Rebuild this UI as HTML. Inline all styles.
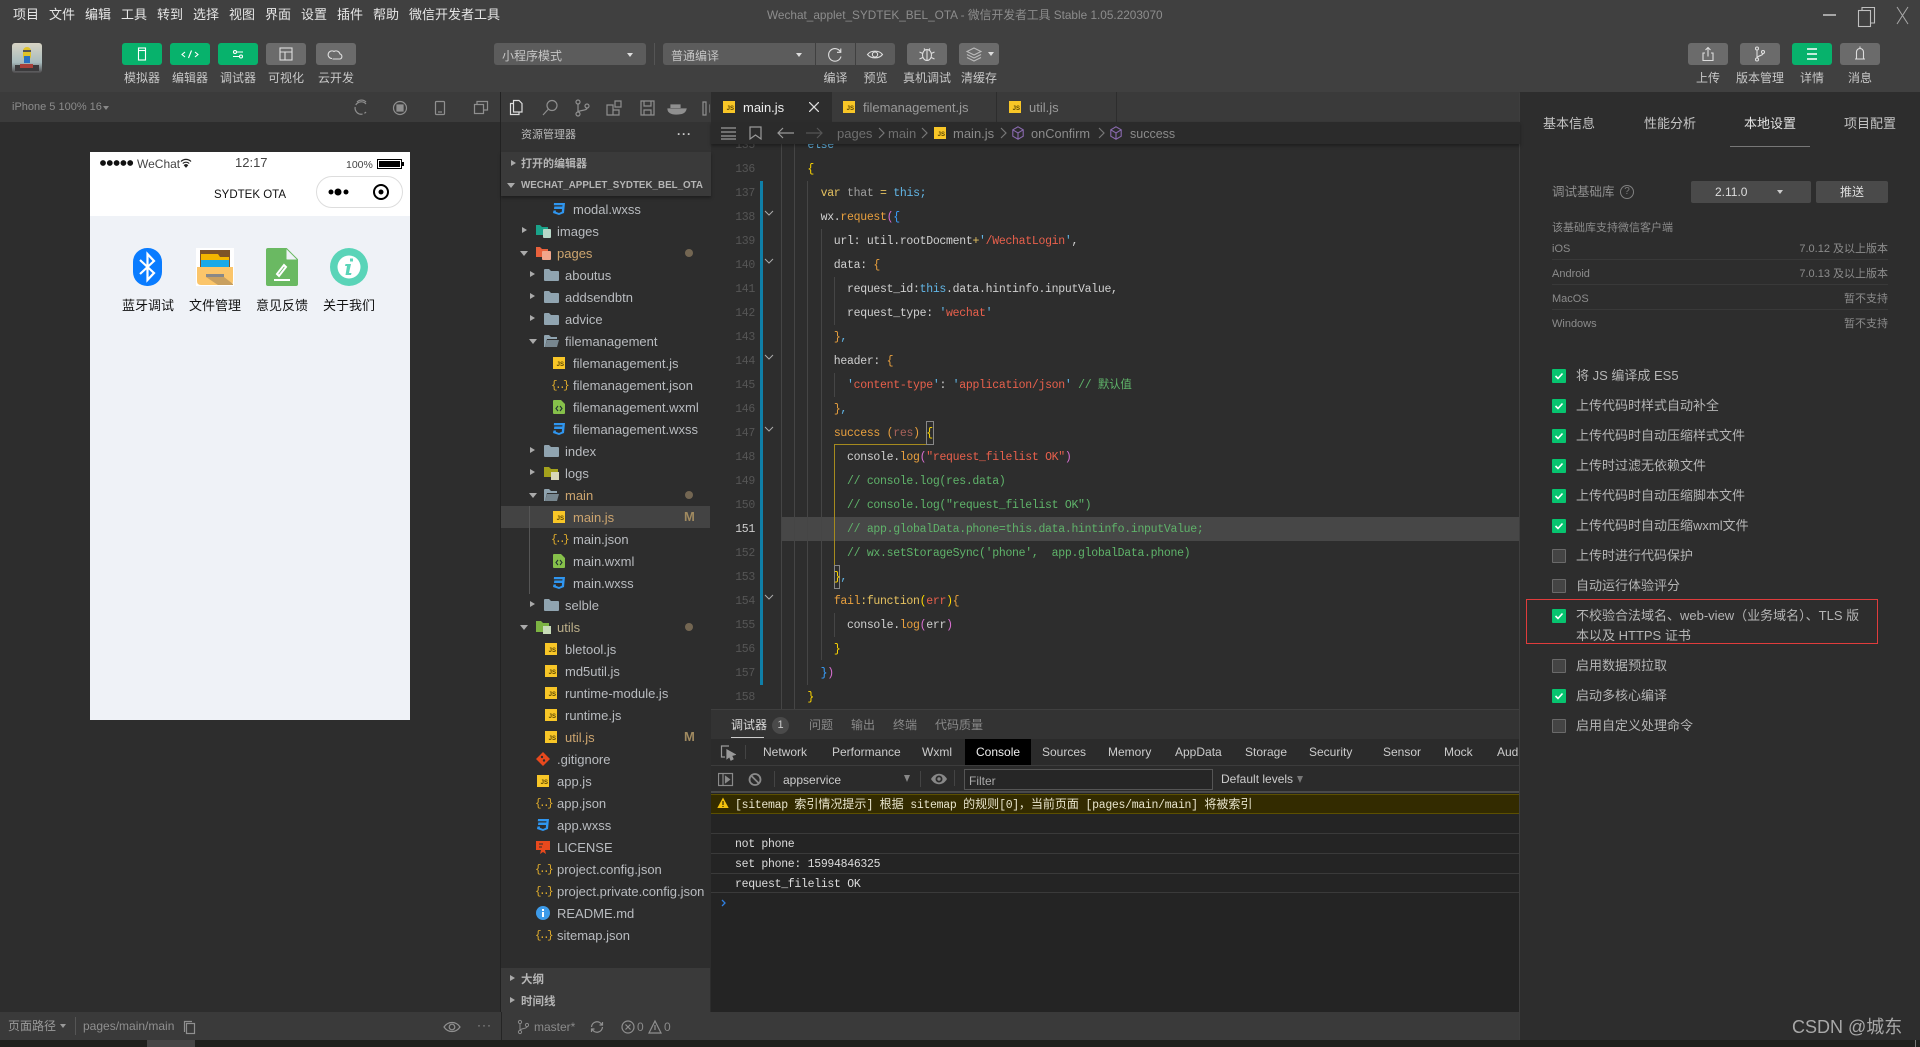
<!DOCTYPE html>
<html lang="zh"><head><meta charset="utf-8"><title>微信开发者工具</title>
<style>
*{box-sizing:border-box}
html,body{margin:0;padding:0;width:1920px;height:1047px;overflow:hidden;background:#2d2d2d;font-family:"Liberation Sans","Noto Sans CJK SC",sans-serif;color:#bbb}
.a{position:absolute;white-space:nowrap}
.t{position:absolute;white-space:nowrap;line-height:18px;font-size:13px}
.m{position:absolute;top:7px;line-height:16px;font-size:13px;color:#e6e6e6}
.btn{position:absolute;top:43px;width:40px;height:22px;border-radius:3px;background:#6b6b6b}
.g{background:#07b26c}
.btn svg{position:absolute;left:10px;top:1px;width:20px;height:20px;fill:none;stroke:#ddd;stroke-width:1.1}
.g svg{stroke:#fff}
.lb{position:absolute;top:70px;line-height:16px;font-size:12px;color:#c8c8c8;text-align:center;white-space:nowrap}
.r{position:absolute;height:22px;line-height:24px;font-size:13px;color:#b9bcc0;white-space:nowrap}
.o{color:#cda56f}
.ar{position:absolute;width:0;height:0;border-left:5px solid #aaa;border-top:3.5px solid transparent;border-bottom:3.5px solid transparent}
.ad{position:absolute;width:0;height:0;border-top:5px solid #aaa;border-left:4px solid transparent;border-right:4px solid transparent}
.js{position:absolute;width:12px;height:12px;background:#f8c627;color:#5a4500;font:bold 6px/7px "Liberation Sans",sans-serif;text-align:right;padding:5px 1px 0 0;overflow:hidden}
.fo{position:absolute;width:15px;height:12px}
.dot{position:absolute;width:8px;height:8px;border-radius:50%;background:#736652}
.mm{position:absolute;color:#a08a60;font-size:13px;font-weight:bold;line-height:16px}
.js2{position:absolute;color:#e5b02c;font:11px/16px "Liberation Mono",monospace;letter-spacing:-2.6px}
.ic{position:absolute;fill:none;stroke:#8f8f8f;stroke-width:1.2}
#code{position:absolute;left:711px;top:144px;width:809px;height:565px;overflow:hidden}
.l{position:absolute;left:70px;height:24px;font:11.5px/26px "Liberation Mono","Noto Sans CJK SC",monospace;letter-spacing:-.3px;color:#d0d0d0;white-space:pre}
.n{position:absolute;left:0;width:44px;text-align:right;height:24px;font:11.5px/26px "Liberation Mono",monospace;letter-spacing:-.3px;color:#555}
.kw{color:#e6c260}.tb{color:#62b6e6}.st{color:#e8604c}.cm{color:#5fb36a}.or{color:#e9a03e}.ye{color:#ffd700}.pu{color:#d86fd0}.bl{color:#38a0ff}.gr{color:#a0a0a0}.br{color:#a8625a}
.gd{position:absolute;width:1px;background:#454545}
.dt{position:absolute;top:744px;line-height:16px;font-size:12px;color:#ccc}
.dbt{position:absolute;top:717px;line-height:16px;font-size:12px;color:#8a8a8a}
.cl{position:absolute;left:735px;height:16px;font:11.5px/16px "Liberation Mono","Noto Sans CJK SC",monospace;letter-spacing:-.3px;color:#ddd;white-space:pre}
.cl b{font-weight:normal;font-size:12px;letter-spacing:0}
.hr{position:absolute;left:711px;width:809px;height:1px;background:#3a3a3a}
.cb{position:absolute;left:1552px;width:14px;height:14px;border-radius:1px;background:#07c46f}
.cb svg{position:absolute;left:1px;top:1px;width:12px;height:12px;fill:none;stroke:#fff;stroke-width:1.6}
.cn{position:absolute;left:1552px;width:14px;height:14px;border-radius:1px;background:#444;border:1px solid #6a6a6a}
.ck{position:absolute;left:1576px;line-height:22px;height:20px;font-size:13px;color:#b5b5b5;white-space:nowrap}
.inf{position:absolute;line-height:16px;height:14px;font-size:11px;color:#8c8c8c;white-space:nowrap}
.rh{position:absolute;left:1552px;width:336px;height:1px;background:#393939}
</style></head><body>

<!-- top area -->
<div class="a" style="left:0;top:0;width:1920px;height:92px;background:#404040"></div>
<div class="m" style="left:13px">项目</div><div class="m" style="left:49px">文件</div><div class="m" style="left:85px">编辑</div><div class="m" style="left:121px">工具</div><div class="m" style="left:157px">转到</div><div class="m" style="left:193px">选择</div><div class="m" style="left:229px">视图</div><div class="m" style="left:265px">界面</div><div class="m" style="left:301px">设置</div><div class="m" style="left:337px">插件</div><div class="m" style="left:373px">帮助</div><div class="m" style="left:409px">微信开发者工具</div>
<div class="a" style="left:767px;top:7px;line-height:16px;font-size:11.8px;color:#8d8d8d">Wechat_applet_SYDTEK_BEL_OTA - 微信开发者工具 Stable 1.05.2203070</div>
<svg class="a" style="left:1820px;top:4px" width="95" height="24" fill="none" stroke="#c0c0c0" stroke-width="1.1"><path d="M3 11H16" stroke-width="1.6"/><rect x="38.5" y="6.500" width="12" height="16"/><path d="M42 6.500V3.500H54.500V19H50.500"/><path d="M77 3L88 20M88 3L77 20" stroke="#a8a8a8" stroke-width="1"/></svg>

<!-- avatar -->
<svg class="a" style="left:12px;top:43px;border-radius:3px" width="30" height="30"><defs><linearGradient id="av" x1="0" y1="0" x2="0" y2="1"><stop offset="0" stop-color="#d8d4c4"/><stop offset=".65" stop-color="#a8bcbe"/><stop offset="1" stop-color="#4d4a4c"/></linearGradient></defs><rect width="30" height="30" fill="url(#av)"/><rect x="11" y="4" width="8" height="13" rx="4" fill="#e0c228"/><rect x="12" y="13" width="6" height="7" fill="#2a6fc0"/><rect x="3" y="22" width="24" height="6" fill="#3b3a3c"/><rect x="8" y="21" width="13" height="4" fill="#a8403a"/><rect x="11" y="7" width="8" height="2" fill="#555"/></svg>

<div class="btn g" style="left:122px"><svg viewBox="0 0 20 20"><rect x="6.500" y="4" width="7" height="12"/><path d="M6.500 6.500H13.500"/></svg></div>
<div class="btn g" style="left:170px"><svg viewBox="0 0 20 20"><path d="M5 8L2 10.500L5 13M15 8L18 10.500L15 13M11.500 6.500L8.500 14"/></svg></div>
<div class="btn g" style="left:218px"><svg viewBox="0 0 20 20"><path d="M5 8H15M5 12.500H15"/><circle cx="7" cy="8" r="1.500" fill="#07b26c"/><circle cx="13" cy="12.500" r="1.500" fill="#07b26c"/></svg></div>
<div class="btn" style="left:266px"><svg viewBox="0 0 20 20"><rect x="4" y="4" width="12" height="12"/><path d="M4 8H16M9 8V16"/></svg></div>
<div class="btn" style="left:316px"><svg viewBox="0 0 20 20"><path d="M6 14.500A3.800 3.800 0 1 1 8 7.500A4 4 0 0 1 14 10A2.600 2.600 0 0 1 14 15H6.500"/></svg></div>
<div class="lb" style="left:122px;width:40px">模拟器</div><div class="lb" style="left:170px;width:40px">编辑器</div><div class="lb" style="left:218px;width:40px">调试器</div><div class="lb" style="left:266px;width:40px">可视化</div><div class="lb" style="left:316px;width:40px">云开发</div>

<div class="a" style="left:494px;top:43px;width:152px;height:22px;background:#5c5c5c;border-radius:3px"></div>
<div class="t" style="left:502px;top:47px;font-size:12px;color:#c6c6c6">小程序模式</div>
<div class="a" style="left:627px;top:53px;border-top:4px solid #ddd;border-left:3px solid transparent;border-right:3px solid transparent"></div>
<div class="a" style="left:654px;top:43px;width:1px;height:22px;background:#555"></div>
<div class="a" style="left:663px;top:43px;width:152px;height:22px;background:#5c5c5c;border-radius:3px 0 0 3px"></div>
<div class="t" style="left:671px;top:47px;font-size:12px;color:#c6c6c6">普通编译</div>
<div class="a" style="left:796px;top:53px;border-top:4px solid #ddd;border-left:3px solid transparent;border-right:3px solid transparent"></div>
<div class="btn" style="left:816px;width:39px;background:#5c5c5c;border-radius:0"><svg viewBox="0 0 20 20" style="left:9px"><path d="M15.500 8A6.300 6.300 0 1 0 16 12.500M15.800 4.500V8.300H12"/></svg></div>
<div class="btn" style="left:856px;width:39px;background:#5c5c5c;border-radius:0 3px 3px 0"><svg viewBox="0 0 20 20" style="left:9px"><path d="M2.500 10.500C6 6 14 6 17.500 10.500C14 15 6 15 2.500 10.500Z"/><circle cx="10" cy="10.500" r="2.600"/></svg></div>
<div class="btn" style="left:907px"><svg viewBox="0 0 20 20"><ellipse cx="10" cy="11" rx="4.500" ry="5.500"/><path d="M7 4.500L8.500 6.500M13 4.500L11.500 6.500M10 6V16.500M2.500 8L5.800 9.500M17.500 8L14.200 9.500M2.500 15L5.800 13.500M17.500 15L14.200 13.500"/></svg></div>
<div class="btn" style="left:959px"><svg viewBox="0 0 20 20" style="left:5px;stroke:#bbb"><path d="M10 4L17 7.500L10 11L3 7.500ZM3 10.500L10 14L17 10.500M3 13.500L10 17L17 13.500"/></svg><div class="a" style="left:29px;top:9px;border-top:4px solid #ddd;border-left:3px solid transparent;border-right:3px solid transparent"></div></div>
<div class="lb" style="left:816px;width:39px">编译</div><div class="lb" style="left:856px;width:39px">预览</div><div class="lb" style="left:900px;width:54px">真机调试</div><div class="lb" style="left:955px;width:48px">清缓存</div>

<div class="btn" style="left:1688px"><svg viewBox="0 0 20 20"><path d="M7 9H5V16.500H15V9H13M10 12.500V3.500M7.500 6L10 3.500L12.500 6"/></svg></div>
<div class="btn" style="left:1740px"><svg viewBox="0 0 20 20"><circle cx="7" cy="4.500" r="1.500"/><circle cx="7" cy="15.500" r="1.500"/><circle cx="13" cy="8" r="1.500"/><path d="M7 6V14M13 9.500C13 12 8 11 7 14"/></svg></div>
<div class="btn g" style="left:1792px"><svg viewBox="0 0 20 20"><path d="M5 5H15M5 10H15M5 15H15" stroke-width="1.400"/></svg></div>
<div class="btn" style="left:1840px"><svg viewBox="0 0 20 20"><path d="M6.500 15V8A3.500 3.500 0 0 1 13.500 8V15ZM5 15H15M10 2.500V4.500"/></svg></div>
<div class="lb" style="left:1688px;width:40px">上传</div><div class="lb" style="left:1736px;width:48px">版本管理</div><div class="lb" style="left:1792px;width:40px">详情</div><div class="lb" style="left:1840px;width:40px">消息</div>

<!-- simulator panel -->
<div class="a" style="left:0;top:92px;width:500px;height:30px;background:#3b3b3b"></div>
<div class="t" style="left:12px;top:98px;font-size:11px;color:#8c8c8c">iPhone 5 100% 16</div>
<div class="a" style="left:103px;top:106px;border-top:4px solid #888;border-left:3px solid transparent;border-right:3px solid transparent"></div>
<svg class="ic" style="left:350px;top:98px" width="140" height="20"><path d="M16 6A6.200 6.200 0 1 0 16 14" stroke-dasharray="12 2"/><path d="M7 4A6.200 6.200 0 0 1 16 4"/><circle cx="50" cy="10" r="6.500"/><rect x="47" y="7" width="6" height="6" fill="#8f8f8f"/><rect x="85.500" y="3.500" width="9" height="13" rx="1"/><path d="M88 14H92"/><rect x="124.500" y="6.500" width="9" height="9"/><path d="M127 6.500V3.500H137.500V12H133.500"/></svg>

<div class="a" style="left:90px;top:152px;width:320px;height:568px;background:#eff2f7"></div>
<div class="a" style="left:90px;top:152px;width:320px;height:64px;background:#fff"></div>
<svg class="a" style="left:100px;top:159px" width="36" height="8" fill="#111"><circle cx="3" cy="4" r="2.900"/><circle cx="9.800" cy="4" r="2.900"/><circle cx="16.600" cy="4" r="2.900"/><circle cx="23.400" cy="4" r="2.900"/><circle cx="30.200" cy="4" r="2.900"/></svg>
<div class="t" style="left:137px;top:155px;font-size:12px;color:#444">WeChat</div>
<svg class="a" style="left:180px;top:158px" width="12" height="10" fill="none" stroke="#222" stroke-width="1.200"><path d="M1 3.500A7 7 0 0 1 11 3.500M2.800 5.500A4.500 4.500 0 0 1 9.200 5.500"/><path d="M4.500 7.300A2 2 0 0 1 7.500 7.300L6 9Z" fill="#222"/></svg>
<div class="t" style="left:235px;top:154px;font-size:13px;color:#444">12:17</div>
<div class="t" style="left:346px;top:156px;font-size:10.500px;color:#444">100%</div>
<div class="a" style="left:377px;top:159px;width:25px;height:10px;background:#000;border:1px solid #000;box-shadow:inset 0 0 0 1px #fff"></div>
<div class="a" style="left:402px;top:162px;width:2px;height:4px;background:#000"></div>
<div class="t" style="top:186px;font-size:11.500px;color:#111;transform:translateX(-50%);left:250px">SYDTEK OTA</div>
<div class="a" style="left:316px;top:176px;width:87px;height:32px;border:1px solid #ddd;border-radius:16px;background:#fff"></div>
<svg class="a" style="left:326px;top:180px" width="70" height="24"><circle cx="5" cy="12" r="2.500"/><circle cx="12" cy="12" r="3.500"/><circle cx="20" cy="12" r="2.500"/><circle cx="55" cy="12" r="7" fill="none" stroke="#000" stroke-width="2"/><circle cx="55" cy="12" r="2.500"/></svg>

<svg class="a" style="left:133px;top:248px" width="29" height="38"><rect width="29" height="38" rx="14" fill="#0a7cff"/><path d="M7 12L21 25L14.500 32V6L21 13L7 26" fill="none" stroke="#fff" stroke-width="2.200"/></svg>
<svg class="a" style="left:196px;top:248px" width="38" height="38"><rect width="38" height="38" fill="#fff"/><rect x="4" y="2" width="30" height="22" fill="#7d5327"/><path d="M5 6H22L24 9H33V20H5Z" fill="#f2b600"/><path d="M5 12H33V20H5Z" fill="#19a9e8"/><path d="M1 19H37V33Q37 37 33 37H5Q1 37 1 33Z" fill="#fbc56a"/><path d="M10 26H28V29H10Z" fill="#888"/><path d="M10 29H28L37 36V37H22Z" fill="#c9a060"/></svg>
<svg class="a" style="left:266px;top:248px" width="32" height="38"><path d="M2 0H20L32 12V36Q32 38 30 38H2Q0 38 0 36V2Q0 0 2 0Z" fill="#6ab962"/><path d="M20 0L32 12H21Q20 12 20 11Z" fill="#eff2f7" stroke="#6ab962"/><path d="M11 26L18 17L20 19L13 28ZM8 32H24" fill="none" stroke="#fff" stroke-width="2"/></svg>
<svg class="a" style="left:330px;top:248px" width="38" height="38"><circle cx="19" cy="19" r="19" fill="#5ad4b8"/><circle cx="19" cy="19" r="11.500" fill="#fff"/><path d="M20 10.500h3v3h-3zM15.500 16H21L19 25H21.500L21 27H15.500L17 18H15Z" fill="#5ad4b8"/></svg>
<div class="t" style="left:122px;top:297px;color:#111">蓝牙调试</div><div class="t" style="left:189px;top:297px;color:#111">文件管理</div><div class="t" style="left:256px;top:297px;color:#111">意见反馈</div><div class="t" style="left:323px;top:297px;color:#111">关于我们</div>

<!-- tree panel -->
<div class="a" style="left:500px;top:92px;width:1px;height:920px;background:#222"></div>
<div class="a" style="left:501px;top:92px;width:210px;height:30px;background:#3a3a3a"></div>
<svg class="ic" style="left:508px;top:98px" width="203" height="20"><path d="M5 5.500H2.500V16.500H11V14M5.500 2.500H11L14 5.500V14H5.500Z" stroke="#ddd"/><circle cx="44" cy="7.500" r="5"/><path d="M40 11.500L35 17"/><circle cx="70" cy="4" r="2"/><circle cx="70" cy="16" r="2"/><circle cx="79" cy="8" r="2"/><path d="M70 6V14M79 10C79 13 71 12 70 14"/><path d="M99 7H105V17H99ZM105 12H111V17H105ZM107 3H113V9H107Z"/><path d="M133 3H146V17H133ZM136 3V8H143V3M136 17V12H143V17"/><path d="M160 11H178C177 15 174 16 168 16C163 16 160 14 160 11ZM163 10V7H166V10M166 10V7H169V10M169 10V7H172V10" fill="#8f8f8f"/><path d="M195 4H198V17H195ZM202 7H205V14H202Z"/></svg>
<div class="a" style="left:501px;top:122px;width:210px;height:30px;background:#333"></div>
<div class="t" style="left:521px;top:126px;font-size:11px;color:#bbb">资源管理器</div>
<div class="a" style="left:677px;top:128px;color:#ccc;font-size:12px;line-height:12px;letter-spacing:1px;font-weight:bold">···</div>
<div class="a" style="left:501px;top:152px;width:210px;height:44px;background:#3a3a3a;box-shadow:0 2px 3px rgba(0,0,0,.35)"></div>
<div class="ar" style="left:511px;top:160px"></div><div class="t" style="left:521px;top:155px;font-size:11px;font-weight:bold;color:#b5b5b5">打开的编辑器</div>
<div class="ad" style="left:507px;top:183px"></div><div class="t" style="left:521px;top:177px;font-size:9.800px;font-weight:bold;color:#b5b5b5">WECHAT_APPLET_SYDTEK_BEL_OTA</div>

<div class="a" style="left:501px;top:506px;width:209px;height:22px;background:#434343"></div>
<div class="a" style="left:529px;top:506px;width:1px;height:88px;background:#555"></div>

<svg width="0" height="0" style="position:absolute"><defs>
<symbol id="fd" viewBox="0 0 15 12"><path d="M0 1Q0 0 1 0H5L7 2H14Q15 2 15 3V11Q15 12 14 12H1Q0 12 0 11Z" fill="#90a4b0"/></symbol>
<symbol id="fo" viewBox="0 0 15 12"><path d="M0 1Q0 0 1 0H5L7 2H13V4H3L1 12H0Z" fill="#90a4b0"/><path d="M3 5H15L13 12H1Z" fill="#90a4b0" opacity=".75"/></symbol>
<symbol id="ws" viewBox="0 0 14 14"><path d="M2 1H13L12 11L7 13L1 11L1.500 8.500H4L3.800 9.800L7 11L9.800 9.800L10 7H2L2.300 4.500H10.300L10.500 3.300H1.800Z" fill="#2f96f0"/></symbol>
<symbol id="wx" viewBox="0 0 12 14"><path d="M1 0H8L12 4V13Q12 14 11 14H1Q0 14 0 13V1Q0 0 1 0Z" fill="#86c04a"/><path d="M5 6L3 8.500L5 11M7 6L9 8.500L7 11" fill="none" stroke="#233" stroke-width="1.100"/></symbol>
<symbol id="cube" viewBox="0 0 12 14"><path d="M6 .8L11.200 3.800V10.200L6 13.200L.8 10.200V3.800ZM.8 3.800L6 7L11.200 3.800M6 7V13.200" fill="none" stroke="#8a6ab0" stroke-width="1.100"/></symbol>
<symbol id="gt" viewBox="0 0 12 14"><circle cx="3" cy="2" r="1.600" fill="none" stroke="#8a8a8a"/><circle cx="3" cy="12" r="1.600" fill="none" stroke="#8a8a8a"/><circle cx="10" cy="5" r="1.600" fill="none" stroke="#8a8a8a"/><path d="M3 3.600V10.400M10 6.600C10 9 4 8 3 10.400" fill="none" stroke="#8a8a8a"/></symbol>
</defs></svg>

<svg class="a" style="left:552px;top:202px" width="14" height="14"><use href="#ws"/></svg><div class="r" style="left:573px;top:198px">modal.wxss</div>
<div class="ar" style="left:522px;top:227px"></div><svg class="a" style="left:536px;top:224px" width="15" height="14"><path d="M0 1H4L6 3H12V11H0Z" fill="#1aa38a"/><rect x="7" y="5" width="8" height="9" rx="1" fill="#b8d8c8"/></svg><div class="r" style="left:557px;top:220px">images</div>
<div class="ad" style="left:520px;top:251px"></div><svg class="a" style="left:536px;top:246px" width="15" height="14"><path d="M0 1H4L6 3H12V11H0Z" fill="#e8613c"/><rect x="6" y="5" width="9" height="9" rx="1" fill="#f2a68c"/></svg><div class="r o" style="left:557px;top:242px">pages</div><div class="dot" style="left:685px;top:249px"></div>
<div class="ar" style="left:530px;top:271px"></div><svg class="fo" style="left:544px;top:269px"><use href="#fd"/></svg><div class="r" style="left:565px;top:264px">aboutus</div>
<div class="ar" style="left:530px;top:293px"></div><svg class="fo" style="left:544px;top:291px"><use href="#fd"/></svg><div class="r" style="left:565px;top:286px">addsendbtn</div>
<div class="ar" style="left:530px;top:315px"></div><svg class="fo" style="left:544px;top:313px"><use href="#fd"/></svg><div class="r" style="left:565px;top:308px">advice</div>
<div class="ad" style="left:529px;top:339px"></div><svg class="fo" style="left:544px;top:335px"><use href="#fo"/></svg><div class="r" style="left:565px;top:330px">filemanagement</div>
<div class="js" style="left:553px;top:357px">JS</div><div class="r" style="left:573px;top:352px">filemanagement.js</div>
<div class="js2" style="left:551px;top:378px">{..}</div><div class="r" style="left:573px;top:374px">filemanagement.json</div>
<svg class="a" style="left:553px;top:400px" width="12" height="14"><use href="#wx"/></svg><div class="r" style="left:573px;top:396px">filemanagement.wxml</div>
<svg class="a" style="left:552px;top:422px" width="14" height="14"><use href="#ws"/></svg><div class="r" style="left:573px;top:418px">filemanagement.wxss</div>
<div class="ar" style="left:530px;top:447px"></div><svg class="fo" style="left:544px;top:445px"><use href="#fd"/></svg><div class="r" style="left:565px;top:440px">index</div>
<div class="ar" style="left:530px;top:469px"></div><svg class="a" style="left:544px;top:467px" width="15" height="13"><path d="M0 0H5L7 2H14V10H0Z" fill="#a4a21c"/><rect x="7" y="5" width="8" height="8" fill="#d8d8b8"/></svg><div class="r" style="left:565px;top:462px">logs</div>
<div class="ad" style="left:529px;top:493px"></div><svg class="fo" style="left:544px;top:489px"><use href="#fo"/></svg><div class="r o" style="left:565px;top:484px">main</div><div class="dot" style="left:685px;top:491px"></div>
<div class="js" style="left:553px;top:511px">JS</div><div class="r o" style="left:573px;top:506px">main.js</div><div class="mm" style="left:684px;top:509px">M</div>
<div class="js2" style="left:551px;top:532px">{..}</div><div class="r" style="left:573px;top:528px">main.json</div>
<svg class="a" style="left:553px;top:554px" width="12" height="14"><use href="#wx"/></svg><div class="r" style="left:573px;top:550px">main.wxml</div>
<svg class="a" style="left:552px;top:576px" width="14" height="14"><use href="#ws"/></svg><div class="r" style="left:573px;top:572px">main.wxss</div>
<div class="ar" style="left:530px;top:601px"></div><svg class="fo" style="left:544px;top:599px"><use href="#fd"/></svg><div class="r" style="left:565px;top:594px">selble</div>
<div class="ad" style="left:520px;top:625px"></div><svg class="a" style="left:536px;top:621px" width="15" height="14"><path d="M0 0H5L7 2H13V11H0Z" fill="#7cb342"/><rect x="7" y="5" width="8" height="8" fill="#c8dcb8"/></svg><div class="r" style="left:557px;top:616px;color:#bdb08a">utils</div><div class="dot" style="left:685px;top:623px"></div>
<div class="js" style="left:545px;top:643px">JS</div><div class="r" style="left:565px;top:638px">bletool.js</div>
<div class="js" style="left:545px;top:665px">JS</div><div class="r" style="left:565px;top:660px">md5util.js</div>
<div class="js" style="left:545px;top:687px">JS</div><div class="r" style="left:565px;top:682px">runtime-module.js</div>
<div class="js" style="left:545px;top:709px">JS</div><div class="r" style="left:565px;top:704px">runtime.js</div>
<div class="js" style="left:545px;top:731px">JS</div><div class="r o" style="left:565px;top:726px">util.js</div><div class="mm" style="left:684px;top:729px">M</div>
<svg class="a" style="left:536px;top:752px" width="14" height="14"><path d="M7 0L14 7L7 14L0 7Z" fill="#e8491d"/><circle cx="6" cy="5" r="1.200" fill="#2d2d2d"/><circle cx="8" cy="8.500" r="1.200" fill="#2d2d2d"/></svg><div class="r" style="left:557px;top:748px">.gitignore</div>
<div class="js" style="left:537px;top:775px">JS</div><div class="r" style="left:557px;top:770px">app.js</div>
<div class="js2" style="left:535px;top:796px">{..}</div><div class="r" style="left:557px;top:792px">app.json</div>
<svg class="a" style="left:536px;top:818px" width="14" height="14"><use href="#ws"/></svg><div class="r" style="left:557px;top:814px">app.wxss</div>
<svg class="a" style="left:536px;top:841px" width="14" height="13"><path d="M0 0H14V9H9L10 13L7 11L4 13L5 9H0Z" fill="#e8491d"/><path d="M3 3H7M3 6H6" stroke="#2d2d2d"/></svg><div class="r" style="left:557px;top:836px">LICENSE</div>
<div class="js2" style="left:535px;top:862px">{..}</div><div class="r" style="left:557px;top:858px">project.config.json</div>
<div class="js2" style="left:535px;top:884px">{..}</div><div class="r" style="left:557px;top:880px">project.private.config.json</div>
<svg class="a" style="left:536px;top:906px" width="14" height="14"><circle cx="7" cy="7" r="7" fill="#3d9be9"/><path d="M6 3h2v2H6zM6 6h2v5H6z" fill="#fff"/></svg><div class="r" style="left:557px;top:902px">README.md</div>
<div class="js2" style="left:535px;top:928px">{..}</div><div class="r" style="left:557px;top:924px">sitemap.json</div>

<div class="a" style="left:501px;top:968px;width:209px;height:44px;background:#3a3a3a"></div>
<div class="ar" style="left:510px;top:975px"></div><div class="t" style="left:521px;top:971px;font-size:11.500px;font-weight:bold;color:#b5b5b5">大纲</div>
<div class="ar" style="left:510px;top:997px"></div><div class="t" style="left:521px;top:993px;font-size:11.500px;font-weight:bold;color:#b5b5b5">时间线</div>

<!-- editor -->
<div class="a" style="left:710px;top:92px;width:810px;height:30px;background:#3a3a3a"></div>
<div class="a" style="left:711px;top:92px;width:120px;height:30px;background:#2d2d2d"></div>
<div class="a" style="left:831px;top:92px;width:1px;height:30px;background:#2d2d2d"></div>
<div class="a" style="left:996px;top:92px;width:1px;height:30px;background:#2d2d2d"></div>
<div class="a" style="left:1116px;top:92px;width:1px;height:30px;background:#2d2d2d"></div>
<div class="js" style="left:723px;top:101px">JS</div><div class="t" style="left:743px;top:99px;color:#eee">main.js</div>
<svg class="a" style="left:809px;top:102px" width="10" height="10" stroke="#ddd" stroke-width="1.300"><path d="M0 0L10 10M10 0L0 10"/></svg>
<div class="js" style="left:843px;top:101px">JS</div><div class="t" style="left:863px;top:99px;color:#9a9a9a">filemanagement.js</div>
<div class="js" style="left:1009px;top:101px">JS</div><div class="t" style="left:1029px;top:99px;color:#9a9a9a">util.js</div>

<div class="a" style="left:711px;top:122px;width:809px;height:22px;background:#2b2b2b;box-shadow:0 2px 3px rgba(0,0,0,.35);z-index:2"></div>
<div style="position:absolute;z-index:3;left:0;top:0">
<svg class="ic" style="left:718px;top:125px" width="115" height="16"><path d="M3 3H18M3 7H18M3 11H18M3 14H18" stroke="#9a9a9a"/><path d="M32 2H43V14L37.500 10L32 14Z" stroke="#9a9a9a"/><path d="M76 8H60M65 3L60 8L65 13" stroke="#9a9a9a"/><path d="M88 8H104M99 3L104 8L99 13" stroke="#555"/></svg>
<div class="t" style="left:837px;top:125px;color:#6f6f6f">pages</div>
<svg class="ic" style="left:877px;top:127px;stroke:#777" width="8" height="12"><path d="M2 1L7 6L2 11"/></svg>
<div class="t" style="left:888px;top:125px;color:#6f6f6f">main</div>
<svg class="ic" style="left:920px;top:127px;stroke:#777" width="8" height="12"><path d="M2 1L7 6L2 11"/></svg>
<div class="js" style="left:934px;top:127px">JS</div>
<div class="t" style="left:953px;top:125px;color:#8a8a8a">main.js</div>
<svg class="ic" style="left:999px;top:127px;stroke:#777" width="8" height="12"><path d="M2 1L7 6L2 11"/></svg>
<svg class="a" style="left:1012px;top:126px" width="12" height="14"><use href="#cube"/></svg>
<div class="t" style="left:1031px;top:125px;color:#8a8a8a;font-size:12.800px">onConfirm</div>
<svg class="ic" style="left:1097px;top:127px;stroke:#777" width="8" height="12"><path d="M2 1L7 6L2 11"/></svg>
<svg class="a" style="left:1110px;top:126px" width="12" height="14"><use href="#cube"/></svg>
<div class="t" style="left:1130px;top:125px;color:#8a8a8a;font-size:12.500px">success</div>
</div>

<div id="code">
<div class="a" style="left:70px;top:373px;width:739px;height:24px;background:#474747"></div>
<div class="gd" style="left:70px;top:0;height:565px"></div>
<div class="gd" style="left:83px;top:0;height:565px"></div>
<div class="gd" style="left:96px;top:37px;height:504px"></div>
<div class="gd" style="left:110px;top:85px;height:431px"></div>
<div class="gd" style="left:123px;top:133px;height:48px"></div>
<div class="gd" style="left:123px;top:229px;height:24px"></div>
<div class="gd" style="left:123px;top:469px;height:24px"></div>
<div class="a" style="left:49px;top:37px;width:3px;height:504px;background:#0f7fa8"></div>
<div class="a" style="left:123px;top:300px;width:100px;height:1px;background:#a58a1e"></div>
<div class="a" style="left:123px;top:300px;width:1px;height:121px;background:#a58a1e"></div>
<div class="a" style="left:215px;top:277px;width:8px;height:24px;border:1px solid #888"></div>
<div class="a" style="left:123px;top:421px;width:6px;height:24px;border:1px solid #888"></div>
<svg class="a" style="left:52px;top:0" width="14" height="565" fill="none" stroke="#aaa" stroke-width="1"><path d="M2 67L6 71L10 67M2 115L6 119L10 115M2 211L6 215L10 211M2 283L6 287L10 283M2 451L6 455L10 451"/></svg>

<div class="n" style="top:-11px">135</div><div class="l tb" style="top:-11px">    else</div>
<div class="n" style="top:13px">136</div><div class="l ye" style="top:13px">    {</div>
<div class="n" style="top:37px">137</div><div class="l" style="top:37px">      <span class="kw">var</span> <span class="gr">that</span> <span class="kw">=</span> <span class="tb">this;</span></div>
<div class="n" style="top:61px">138</div><div class="l" style="top:61px">      wx.<span class="or">request</span><span class="pu">(</span><span class="bl">{</span></div>
<div class="n" style="top:85px">139</div><div class="l" style="top:85px">        url: util.rootDocment<span class="kw">+</span><span class="tb">'</span><span class="st">/WechatLogin</span><span class="tb">'</span>,</div>
<div class="n" style="top:109px">140</div><div class="l" style="top:109px">        data: <span class="or">{</span></div>
<div class="n" style="top:133px">141</div><div class="l" style="top:133px">          request_id:<span class="tb">this</span>.data.hintinfo.inputValue,</div>
<div class="n" style="top:157px">142</div><div class="l" style="top:157px">          request_type: <span class="tb">'</span><span class="st">wechat</span><span class="tb">'</span></div>
<div class="n" style="top:181px">143</div><div class="l" style="top:181px">        <span class="or">}</span><span class="tb">,</span></div>
<div class="n" style="top:205px">144</div><div class="l" style="top:205px">        header: <span class="or">{</span></div>
<div class="n" style="top:229px">145</div><div class="l" style="top:229px">          <span class="tb">'</span><span class="st">content-type</span><span class="tb">'</span>: <span class="tb">'</span><span class="st">application/json</span><span class="tb">'</span> <span class="cm">// 默认值</span></div>
<div class="n" style="top:253px">146</div><div class="l" style="top:253px">        <span class="or">}</span><span class="tb">,</span></div>
<div class="n" style="top:277px">147</div><div class="l" style="top:277px">        <span class="or">success</span> <span class="or">(</span><span class="br">res</span><span class="or">)</span> <span class="ye">{</span></div>
<div class="n" style="top:301px">148</div><div class="l" style="top:301px">          console.<span class="or">log</span><span class="pu">(</span><span class="st">"request_filelist OK"</span><span class="pu">)</span></div>
<div class="n" style="top:325px">149</div><div class="l cm" style="top:325px">          // console.log(res.data)</div>
<div class="n" style="top:349px">150</div><div class="l cm" style="top:349px">          // console.log("request_filelist OK")</div>
<div class="n" style="top:373px;color:#ccc">151</div><div class="l cm" style="top:373px">          // app.globalData.phone=this.data.hintinfo.inputValue;</div>
<div class="n" style="top:397px">152</div><div class="l cm" style="top:397px">          // wx.setStorageSync('phone',  app.globalData.phone)</div>
<div class="n" style="top:421px">153</div><div class="l" style="top:421px">        <span class="ye">}</span><span class="tb">,</span></div>
<div class="n" style="top:445px">154</div><div class="l" style="top:445px">        <span class="or">fail</span><span class="kw">:function</span><span class="ye">(</span><span class="st">err</span><span class="ye">)</span><span class="or">{</span></div>
<div class="n" style="top:469px">155</div><div class="l" style="top:469px">          console.<span class="or">log</span><span class="pu">(</span>err<span class="pu">)</span></div>
<div class="n" style="top:493px">156</div><div class="l" style="top:493px">        <span class="ye">}</span></div>
<div class="n" style="top:517px">157</div><div class="l" style="top:517px">      <span class="bl">}</span><span class="pu">)</span></div>
<div class="n" style="top:541px">158</div><div class="l ye" style="top:541px">    }</div>
</div>

<!-- debug panel -->
<div class="a" style="left:711px;top:709px;width:809px;height:303px;background:#242424;border-top:1px solid #3f3f3f"></div>
<div class="a" style="left:711px;top:710px;width:809px;height:29px;background:#333"></div>
<div class="t" style="left:731px;top:716px;font-size:12px;color:#ddd">调试器</div>
<div class="a" style="left:731px;top:737px;width:33px;height:1px;background:#ccc"></div>
<div class="a" style="left:772px;top:717px;width:17px;height:17px;border-radius:50%;background:#4a4a4a;color:#ccc;font-size:11px;line-height:17px;text-align:center">1</div>
<div class="dbt" style="left:809px">问题</div><div class="dbt" style="left:851px">输出</div><div class="dbt" style="left:893px">终端</div><div class="dbt" style="left:935px">代码质量</div>

<div class="a" style="left:711px;top:739px;width:809px;height:27px;background:#2b2b2b;border-bottom:1px solid #3c3c3c"></div>
<svg class="ic" style="left:720px;top:744px;stroke:#999" width="16" height="18"><path d="M9 2H1.500V13H5"/><path d="M7 6L15 10.500L11.500 11.500L13 15L11 16L9.500 12.500L7 14.500Z" fill="#999"/></svg>
<div class="a" style="left:745px;top:745px;width:1px;height:14px;background:#444"></div>
<div class="dt" style="left:763px">Network</div><div class="dt" style="left:832px">Performance</div><div class="dt" style="left:922px">Wxml</div>
<div class="a" style="left:965px;top:739px;width:66px;height:26px;background:#000"></div>
<div class="dt" style="left:976px;color:#eee">Console</div><div class="dt" style="left:1042px">Sources</div><div class="dt" style="left:1108px">Memory</div><div class="dt" style="left:1175px">AppData</div><div class="dt" style="left:1245px">Storage</div><div class="dt" style="left:1309px">Security</div><div class="dt" style="left:1383px">Sensor</div><div class="dt" style="left:1444px">Mock</div><div class="dt" style="left:1497px;width:23px;overflow:hidden">Audits</div>

<div class="a" style="left:711px;top:766px;width:809px;height:27px;background:#2b2b2b;border-bottom:2px solid #4a4a4a"></div>
<svg class="ic" style="left:718px;top:771px;stroke:#8a8a8a" width="50" height="18"><rect x=".5" y="2.500" width="14" height="12"/><path d="M5 2.500V14.500"/><path d="M7.500 5.500L11.500 8.500L7.500 11.500Z" fill="#8a8a8a"/><circle cx="37" cy="8.500" r="5.500" stroke-width="1.800"/><path d="M33.500 5L40.500 12" stroke-width="1.800"/></svg>
<div class="a" style="left:774px;top:771px;width:1px;height:16px;background:#444"></div>
<div class="t" style="left:783px;top:771px;font-size:12px;color:#ccc">appservice</div>
<div class="a" style="left:904px;top:775px;border-top:7px solid #888;border-left:3.500px solid transparent;border-right:3.500px solid transparent"></div>
<div class="a" style="left:920px;top:771px;width:1px;height:16px;background:#444"></div>
<svg class="a" style="left:931px;top:772px" width="16" height="14"><path d="M0 7C4 0 12 0 16 7C12 14 4 14 0 7Z" fill="#888"/><circle cx="8" cy="7" r="3.500" fill="#2b2b2b"/><circle cx="8" cy="7" r="1.700" fill="#888"/></svg>
<div class="a" style="left:954px;top:770px;width:1px;height:16px;background:#444"></div>
<div class="a" style="left:964px;top:769px;width:249px;height:21px;border:1px solid #555;background:#262626"></div>
<div class="t" style="left:969px;top:772px;font-size:12px;color:#aaa">Filter</div>
<div class="t" style="left:1221px;top:770px;font-size:12px;color:#ccc">Default levels</div>
<div class="a" style="left:1297px;top:776px;border-top:7px solid #777;border-left:3.500px solid transparent;border-right:3.500px solid transparent"></div>

<div class="a" style="left:711px;top:794px;width:809px;height:20px;background:#332b00;border-bottom:1px solid #5c5000;border-top:1px solid #5c5000"></div>
<svg class="a" style="left:717px;top:797px" width="12" height="12"><path d="M6 .5L11.700 11H.3Z" fill="#f4c20d"/><path d="M5.400 4H6.600V8H5.400ZM5.400 9H6.600V10H5.400Z" fill="#332b00"/></svg>
<div class="cl" style="top:797px;color:#e8e4cc">[sitemap <b>索引情况提示</b>] <b>根据</b> sitemap <b>的规则</b>[0]<b>，当前页面</b> [pages/main/main] <b>将被索引</b></div>
<div class="hr" style="top:833px"></div>
<div class="cl" style="top:836px;line-height:18px">not phone</div><div class="hr" style="top:853px"></div>
<div class="cl" style="top:856px;line-height:18px">set phone: 15994846325</div><div class="hr" style="top:873px"></div>
<div class="cl" style="top:876px;line-height:18px">request_filelist OK</div><div class="hr" style="top:892px"></div>
<svg class="a" style="left:720px;top:898px" fill="none" stroke="#2f7fe0" stroke-width="1.300" width="8" height="10"><path d="M2 2L5 5L2 8"/></svg>

<!-- status bar -->
<div class="a" style="left:0;top:1012px;width:1520px;height:28px;background:#3a3a3a"></div>
<div class="a" style="left:501px;top:1012px;width:1px;height:28px;background:#252525"></div>
<div class="t" style="left:8px;top:1017px;font-size:12px;color:#9a9a9a">页面路径</div>
<div class="a" style="left:60px;top:1024px;border-top:4px solid #999;border-left:3px solid transparent;border-right:3px solid transparent"></div>
<div class="a" style="left:75px;top:1017px;width:1px;height:18px;background:#555"></div>
<div class="t" style="left:83px;top:1017px;font-size:12px;color:#8f8f8f">pages/main/main</div>
<svg class="ic" style="left:182px;top:1019px" width="14" height="16"><path d="M2.500 13V2.500H10"/><rect x="4.500" y="4.500" width="8" height="10"/></svg>
<svg class="ic" style="left:443px;top:1020px" width="18" height="14"><path d="M1 7C5 1 13 1 17 7C13 13 5 13 1 7Z"/><circle cx="9" cy="7" r="2.800"/></svg>
<div class="a" style="left:477px;top:1018px;color:#999;font-size:12px;line-height:14px;letter-spacing:1px">···</div>
<svg class="a" style="left:517px;top:1019px" width="12" height="16"><use href="#gt"/></svg>
<div class="t" style="left:534px;top:1018px;font-size:12px;color:#8a8a8a">master*</div>
<svg class="ic" style="left:590px;top:1020px" width="14" height="14"><path d="M1.500 7A5.500 5.500 0 0 1 12 5M12.500 7A5.500 5.500 0 0 1 2 9M9.500 5H12.500V2M4.500 9H1.500V12"/></svg>
<svg class="ic" style="left:621px;top:1019px" width="14" height="16"><circle cx="7" cy="8" r="6"/><path d="M4.500 5.500L9.500 10.500M9.500 5.500L4.500 10.500"/></svg>
<div class="t" style="left:637px;top:1018px;font-size:12px;color:#8a8a8a">0</div>
<svg class="ic" style="left:648px;top:1019px" width="14" height="16"><path d="M7 2L13 14H1ZM7 6V11"/></svg>
<div class="t" style="left:664px;top:1018px;font-size:12px;color:#8a8a8a">0</div>

<!-- right panel -->
<div class="a" style="left:1519px;top:93px;width:401px;height:947px;background:#2d2d2d;border-left:1px solid #3e3e3e"></div>
<div class="t" style="left:1543px;top:115px;color:#c4c4c4">基本信息</div><div class="t" style="left:1644px;top:115px;color:#c4c4c4">性能分析</div><div class="t" style="left:1744px;top:115px;color:#e2e2e2">本地设置</div><div class="t" style="left:1844px;top:115px;color:#c4c4c4">项目配置</div>
<div class="a" style="left:1730px;top:146px;width:80px;height:1px;background:#777"></div>
<div class="t" style="left:1552px;top:183px;font-size:12.500px;color:#8f8f8f">调试基础库</div>
<div class="a" style="left:1620px;top:185px;width:14px;height:14px;border:1px solid #808080;border-radius:50%;color:#808080;font-size:10px;line-height:12px;text-align:center">?</div>
<div class="a" style="left:1691px;top:181px;width:120px;height:22px;background:#4a4a4a;border-radius:2px"></div>
<div class="t" style="left:1715px;top:183px;font-size:12px;color:#ddd">2.11.0</div>
<div class="a" style="left:1777px;top:190px;border-top:4px solid #ccc;border-left:3px solid transparent;border-right:3px solid transparent"></div>
<div class="a" style="left:1816px;top:181px;width:72px;height:22px;background:#4a4a4a;border-radius:2px;color:#ddd;font-size:12px;line-height:22px;text-align:center">推送</div>
<div class="inf" style="left:1552px;top:220px">该基础库支持微信客户端</div>
<div class="inf" style="left:1552px;top:241px">iOS</div><div class="inf" style="right:32px;top:241px">7.0.12 及以上版本</div><div class="rh" style="top:259px"></div>
<div class="inf" style="left:1552px;top:266px">Android</div><div class="inf" style="right:32px;top:266px">7.0.13 及以上版本</div><div class="rh" style="top:284px"></div>
<div class="inf" style="left:1552px;top:291px">MacOS</div><div class="inf" style="right:32px;top:291px">暂不支持</div><div class="rh" style="top:309px"></div>
<div class="inf" style="left:1552px;top:316px">Windows</div><div class="inf" style="right:32px;top:316px">暂不支持</div>

<div class="cb" style="top:369px"><svg viewBox="0 0 12 12"><path d="M2.500 6L5 8.500L9.500 3.500"/></svg></div><div class="ck" style="top:365px">将 JS 编译成 ES5</div>
<div class="cb" style="top:399px"><svg viewBox="0 0 12 12"><path d="M2.500 6L5 8.500L9.500 3.500"/></svg></div><div class="ck" style="top:395px">上传代码时样式自动补全</div>
<div class="cb" style="top:429px"><svg viewBox="0 0 12 12"><path d="M2.500 6L5 8.500L9.500 3.500"/></svg></div><div class="ck" style="top:425px">上传代码时自动压缩样式文件</div>
<div class="cb" style="top:459px"><svg viewBox="0 0 12 12"><path d="M2.500 6L5 8.500L9.500 3.500"/></svg></div><div class="ck" style="top:455px">上传时过滤无依赖文件</div>
<div class="cb" style="top:489px"><svg viewBox="0 0 12 12"><path d="M2.500 6L5 8.500L9.500 3.500"/></svg></div><div class="ck" style="top:485px">上传代码时自动压缩脚本文件</div>
<div class="cb" style="top:519px"><svg viewBox="0 0 12 12"><path d="M2.500 6L5 8.500L9.500 3.500"/></svg></div><div class="ck" style="top:515px">上传代码时自动压缩wxml文件</div>
<div class="cn" style="top:549px"></div><div class="ck" style="top:545px">上传时进行代码保护</div>
<div class="cn" style="top:579px"></div><div class="ck" style="top:575px">自动运行体验评分</div>
<div class="a" style="left:1526px;top:599px;width:352px;height:45px;border:1px solid #e03c3c"></div>
<div class="cb" style="top:609px"><svg viewBox="0 0 12 12"><path d="M2.500 6L5 8.500L9.500 3.500"/></svg></div><div class="ck" style="top:605px">不校验合法域名、web-view（业务域名）、TLS 版</div><div class="ck" style="top:625px">本以及 HTTPS 证书</div>
<div class="cn" style="top:659px"></div><div class="ck" style="top:655px">启用数据预拉取</div>
<div class="cb" style="top:689px"><svg viewBox="0 0 12 12"><path d="M2.500 6L5 8.500L9.500 3.500"/></svg></div><div class="ck" style="top:685px">启动多核心编译</div>
<div class="cn" style="top:719px"></div><div class="ck" style="top:715px">启用自定义处理命令</div>

<div class="a" style="left:1792px;top:1016px;font-size:18px;line-height:22px;color:#a8a8a8">CSDN @城东</div>

<!-- bottom strip -->
<div class="a" style="left:0;top:1040px;width:1920px;height:7px;background:#1f201d"></div>
<div class="a" style="left:147px;top:1040px;width:48px;height:7px;background:#464646"></div>
<div class="a" style="left:1915px;top:1040px;width:1px;height:7px;background:#777"></div>
</body></html>
